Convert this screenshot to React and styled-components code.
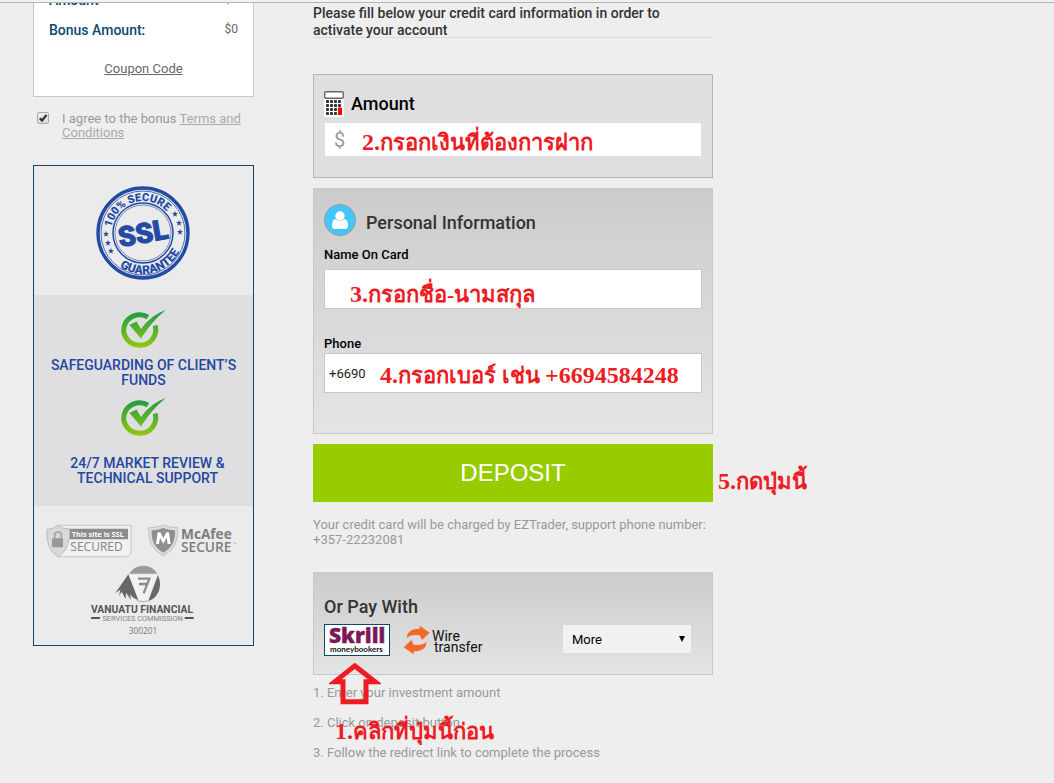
import React, { useState } from "react";
import styled, { createGlobalStyle } from "styled-components";

const GlobalStyle = createGlobalStyle`
  * {
    box-sizing: border-box;
  }

  body {
    margin: 0;
    background: #eeeeee;
    font-family: Roboto, "Liberation Sans", sans-serif;
    font-size: 13px;
    color: #999999;
  }
`;

const TopLine = styled.div`
  height: 3px;
  background: #f2f2f2;
  border-bottom: 1px solid #b6b6b6;
`;

const Page = styled.div`
  display: grid;
  grid-template-columns: 221px minmax(300px, 400px);
  column-gap: 59px;
  align-items: start;
  padding: 0 33px;
  overflow: hidden;
`;

const Sidebar = styled.aside`
  display: flex;
  flex-direction: column;
`;

const BonusCard = styled.div`
  padding: 0 15px 17px;
  background: #ffffff;
  border: 1px solid #c8c8c8;
  border-top: 0;
  overflow: hidden;
`;

const BonusRow = styled.div`
  display: flex;
  justify-content: space-between;
  margin-top: ${(props) => (props.$cut ? "-13px" : "10px")};
  line-height: 20px;
  height: 20px;
  color: #0b4a70;

  strong {
    font-size: 14px;
    font-weight: 500;
  }

  span {
    font-size: 12px;
    line-height: 18px;
    color: #666666;
  }
`;

const CouponLink = styled.a`
  display: block;
  margin-top: 19px;
  line-height: 20px;
  text-align: center;
  color: #666666;
`;

const AgreeRow = styled.div`
  display: flex;
  gap: 13px;
  margin: 15px 0 25px 4px;
  line-height: 14px;

  a {
    color: #aaaaaa;
  }
`;

const CheckWrap = styled.span`
  position: relative;
  flex: none;
  width: 12px;
  height: 12px;

  svg {
    position: absolute;
    inset: 0;
    pointer-events: none;
  }
`;

const Checkbox = styled.input`
  appearance: none;
  display: block;
  width: 12px;
  height: 12px;
  margin: 0;
  border: 1px solid #a8a8a8;
  border-radius: 2px;
  background: linear-gradient(#eeeeee, #dcdcdc);
`;

const TrustBox = styled.div`
  border: 1px solid #0b4a70;
  background: #ebebeb;
  text-align: center;
`;

const SealArea = styled.div`
  padding: 20px 2px 15px 0;

  svg {
    display: block;
    margin: 0 auto;
  }
`;

const Promises = styled.div`
  padding: 14px 10px 20px;
  background: #dfdfe1;
`;

const Promise = styled.div`
  & + & {
    margin-top: 9px;
  }

  svg {
    display: block;
    margin: 0 auto;
  }

  p {
    margin: ${(props) => (props.$loose ? "19px" : "9px")} 0 0;
    padding: ${(props) => (props.$loose ? "0 16px 0 24px" : "0")};
    font-size: 14px;
    font-weight: 500;
    line-height: 15px;
    color: #2347a0;
  }
`;

const Badges = styled.div`
  display: flex;
  flex-wrap: wrap;
  justify-content: space-between;
  padding: 18px 15px 8px 12px;
  row-gap: 7px;
`;

const BadgeBottom = styled.div`
  flex: 1 0 100%;

  svg {
    display: block;
    margin: 0 auto;
  }
`;

const Main = styled.main`
  display: flex;
  flex-direction: column;
`;

const Intro = styled.h1`
  height: 33px;
  margin: 2px 0 36px;
  padding-right: 30px;
  border-bottom: 1px solid #dcdcdc;
  font-size: 14px;
  font-weight: 500;
  line-height: 17px;
  color: #333333;
`;

const AmountPanel = styled.section`
  padding: 16px 11px 21px 10px;
  border: 1px solid #b6b6b6;
  background: #dfdfe1;
`;

const Panel = styled.section`
  margin-top: ${(props) => props.$gap};
  padding: ${(props) => props.$pad};
  border: 1px solid #c8c8c8;
  background: linear-gradient(#cccccc, #e4e4e4);
`;

const PanelHead = styled.div`
  display: flex;
  align-items: ${(props) => props.$align || "center"};
  gap: ${(props) => props.$gap};
`;

const PanelTitle = styled.h2`
  margin: 0;
  font-size: 18px;
  font-weight: 500;
  line-height: 26px;
  color: #333333;
`;

const TitleLabel = styled.label`
  font-size: 18px;
  font-weight: 500;
  line-height: 20px;
  color: #000000;
`;

const AmountField = styled.div`
  position: relative;
  display: flex;
  align-items: center;
  height: 33px;
  margin: 6px 0 0 1px;
  padding-left: 9px;
  background: #ffffff;
  font-size: 20px;
  color: #999999;
`;

const AmountInput = styled.input`
  flex: 1;
  min-width: 0;
  height: 33px;
  border: 0;
  background: transparent;
  font: inherit;
  outline: 0;
`;

const Field = styled.div`
  position: relative;
  margin-top: ${(props) => props.$gap};

  label {
    display: block;
    margin-bottom: ${(props) => props.$labelGap};
    font-weight: 500;
    line-height: 18px;
    color: #000000;
  }

  input {
    display: block;
    width: 100%;
    height: 40px;
    padding: 0 4px;
    border: 1px solid #c8c8c8;
    background: #ffffff;
    font-family: inherit;
    font-size: 13px;
    color: #222222;
    outline: 0;
  }
`;

const DepositRow = styled.div`
  position: relative;
  margin-top: 10px;
`;

const DepositButton = styled.button`
  display: block;
  width: 100%;
  height: 58px;
  padding: 0;
  border: 0;
  background: #99cc00;
  color: #ffffff;
  font-family: "Liberation Sans", Arial, sans-serif;
  font-size: 24px;
  cursor: pointer;
`;

const SmallPrint = styled.p`
  margin: 15px 0 0;
  line-height: 15px;
`;

const PayRow = styled.div`
  position: relative;
  display: flex;
  align-items: center;
  margin-top: 4px;
`;

const PayButton = styled.button`
  height: 32px;
  padding: 0;
  border: ${(props) => (props.$active ? "1px solid #0b4a70" : "0")};
  background: ${(props) => (props.$active ? "#ffffff" : "transparent")};
  cursor: pointer;

  & + & {
    margin-left: 14px;
  }

  svg {
    display: block;
  }
`;

const SelectWrap = styled.div`
  position: relative;
  width: 128px;
  margin: 0 11px 2px auto;

  svg {
    position: absolute;
    top: 11px;
    right: 6px;
    pointer-events: none;
  }
`;

const MoreSelect = styled.select`
  appearance: none;
  display: block;
  width: 100%;
  height: 28px;
  padding: 0 9px;
  border: 0;
  border-radius: 0;
  background: #f1f1f1;
  color: #000000;
  font-family: inherit;
  font-size: 13px;
`;

const Steps = styled.ol`
  position: relative;
  margin: 3px 0 0;
  padding: 0;
  list-style: none;
  line-height: 30px;
`;

// Red hints laid over the form, digits are larger than the Thai words
const Hint = styled.span`
  position: absolute;
  left: ${(props) => props.$left};
  top: ${(props) => props.$top};
  font-family: "Liberation Serif", "Times New Roman", serif;
  font-size: 22px;
  font-weight: 700;
  line-height: 28px;
  white-space: nowrap;
  color: #ed1c24;
  pointer-events: none;

  b {
    font-size: 24px;
  }
`;

const HintArrow = styled.svg`
  position: absolute;
  left: 5px;
  top: 38px;
  z-index: 1;
  pointer-events: none;
`;

const Star = ({ x, y }) => (
  <path
    transform={`translate(${x} ${y})`}
    d="M0-3 .8-.9 3-.9 1.2.5 1.9 2.7 0 1.4-1.9 2.7-1.2.5-3-.9-.8-.9Z"
  />
);

const SslSeal = () => (
  <svg width="94" height="94" viewBox="0 0 94 94" fill="#244ba3">
    <defs>
      <path id="sealTop" d="M15 47A32 32 0 0 1 79 47" />
      <path id="sealBottom" d="M6 47A41 41 0 0 0 88 47" />
    </defs>
    <g fill="none" stroke="#244ba3">
      <circle cx="47" cy="47" r="45" strokeWidth="3.4" />
      <circle cx="47" cy="47" r="42" strokeWidth="0.8" />
      <circle cx="47" cy="47" r="30" strokeWidth="1.5" />
      <circle cx="47" cy="47" r="28" strokeWidth="0.6" />
    </g>
    <g fontFamily="Roboto, sans-serif" fontWeight="900" textAnchor="middle">
      <text fontSize="11" transform="rotate(-16 47 47)">
        <textPath href="#sealTop" startOffset="50%">
          100% SECURE
        </textPath>
      </text>
      <text fontSize="12" transform="rotate(-14 47 47)">
        <textPath href="#sealBottom" startOffset="50%">
          GUARANTEE
        </textPath>
      </text>
      <text
        x="47"
        y="57"
        fontSize="28"
        stroke="#244ba3"
        strokeWidth="1"
        transform="rotate(-10 47 47)"
      >
        SSL
      </text>
    </g>
    <Star x={10} y={48} />
    <Star x={12} y={57} />
    <Star x={15} y={65} />
    <Star x={79} y={28} />
    <Star x={83} y={37} />
    <Star x={84} y={46} />
  </svg>
);

const CheckMark = ({ id }) => (
  <svg width="46" height="40" viewBox="0 0 46 40">
    <defs>
      <linearGradient
        id={id}
        gradientUnits="userSpaceOnUse"
        x1="0"
        y1="3"
        x2="0"
        y2="39"
      >
        <stop offset="0" stopColor="#239c45" />
        <stop offset="1" stopColor="#92c80a" />
      </linearGradient>
    </defs>
    <path
      d="M27 8A16 15.2 0 1 0 34 16.5"
      fill="none"
      stroke={`url(#${id})`}
      strokeWidth="5"
    />
    <path
      d="M8.3 16 15.5 12.5 20 20Q30 6 44.7 1Q31 12 20 29.5Z"
      fill={`url(#${id})`}
    />
  </svg>
);

const SslSecured = () => (
  <svg width="86" height="34" viewBox="46 58 258 102">
    <path
      d="M80 62H301V138Q301 156 283 156H80Z"
      fill="#f1f1f1"
      stroke="#c4c4c4"
      strokeWidth="3"
    />
    <path d="M100 72H292V104H100Z" fill="#8d8d8d" />
    <path
      d="M82 62Q98 74 117 74Q121 132 82 157Q44 132 49 74Q67 74 82 62Z"
      fill="#d9d9d9"
      stroke="#bdbdbd"
      strokeWidth="3"
    />
    <path
      d="M72 104V92Q72 82 82 82Q92 82 92 92V104"
      fill="none"
      stroke="#a4a4a4"
      strokeWidth="5"
    />
    <rect x="64" y="101" width="33" height="27" rx="3" fill="#989898" />
    <g fontFamily="'Open Sans', sans-serif">
      <text x="123" y="96" fontSize="22" fontWeight="700" fill="#ffffff">
        This site is SSL
      </text>
      <text x="119" y="140" fontSize="36" fontWeight="500" fill="#858585">
        SECURED
      </text>
    </g>
  </svg>
);

const McAfee = () => (
  <svg width="90" height="34" viewBox="354 58 270 102">
    <path
      d="M400 61Q420 70 443 69Q448 130 400 153Q352 130 356 69Q380 70 400 61Z"
      fill="#dddddd"
      stroke="#b4b4b4"
      strokeWidth="2"
    />
    <path
      d="M400 70Q418 78 435 77Q438 124 400 144Q362 124 365 77Q382 78 400 70Z"
      fill="#8f8f8f"
    />
    <path
      d="M378 118 383 83H391L400 101L409 83H417L422 118H413L410 99L400 117L390 99L387 118Z"
      fill="#ffffff"
    />
    <g fontFamily="'Open Sans', sans-serif" fill="#7d7d7d">
      <text x="453" y="102" fontSize="41" fontWeight="700">
        McAfee
      </text>
      <text x="453" y="143" fontSize="41" fontWeight="600">
        SECURE
      </text>
      <text x="611" y="122" fontSize="10">
        ™
      </text>
    </g>
  </svg>
);

const Vanuatu = () => (
  <svg width="104" height="72" viewBox="186 181 312 216">
    <path d="M303 207Q319 183 346 183Q374 183 388 207Z" fill="#9a9a9a" />
    <path d="M390 211Q404 246 386 271Q377 285 361 289Z" fill="#686868" />
    <path
      d="M301 209L331 286Q314 281 306 269L309 286L294 264L293 283L281 261L273 274L277 255L262 265Z"
      fill="#686868"
    />
    <path d="M303 211H386L357 286H333Z" fill="#f2f2f2" />
    <path
      d="M330 222H364L347 266M333 238H356"
      fill="none"
      stroke="#8c8c8c"
      strokeWidth="7"
    />
    <path
      d="M326 288Q346 294 365 288"
      fill="none"
      stroke="#b0b0b0"
      strokeWidth="3"
    />
    <g textAnchor="middle" fontFamily="Roboto, 'Liberation Sans', sans-serif">
      <text x="342" y="326" fontSize="31" fontWeight="700" fill="#555555">
        VANUATU FINANCIAL
      </text>
      <text x="344" y="350" fontSize="22" fill="#858585">
        SERVICES COMMISSION
      </text>
      <text
        x="345"
        y="389"
        fontSize="25"
        fill="#777777"
        fontFamily="'Open Sans', sans-serif"
      >
        300201
      </text>
    </g>
    <path d="M189 337H216V343H189ZM470 337H497V343H470Z" fill="#555555" />
  </svg>
);

const Calculator = () => (
  <svg width="20" height="26" viewBox="0 0 20 26">
    <path d="M0 7H20V26H0Z" fill="#ffffff" />
    <rect
      x="0.7"
      y="0.7"
      width="18.6"
      height="6.6"
      rx="1.2"
      fill="#ffffff"
      stroke="#666666"
      strokeWidth="1.4"
    />
    {[9, 13, 17, 21].map((y) =>
      [2, 6, 10, 14].map((x) => (
        <rect
          key={`${x}-${y}`}
          x={x}
          y={y}
          width="3"
          height="3"
          rx="0.8"
          fill="#333333"
        />
      ))
    )}
    <rect x="14" y="16.5" width="4" height="7.5" rx="0.8" fill="#ff0000" />
  </svg>
);

const UserIcon = () => (
  <svg width="32" height="32" viewBox="0 0 96 96">
    <circle
      cx="48"
      cy="48"
      r="46.5"
      fill="#45c6fb"
      stroke="#8e9ba1"
      strokeWidth="3"
    />
    <path
      d="M34 45Q24 47 24 65Q24 75 34 75H62Q72 75 72 65Q72 47 62 45Q55 51 48 51Q41 51 34 45Z"
      fill="#ffffff"
    />
    <circle cx="48" cy="36" r="14" fill="#ffffff" />
  </svg>
);

const SkrillLogo = () => (
  <svg
    width="64"
    height="30"
    viewBox="0 0 64 30"
    fontFamily="'Open Sans', sans-serif"
  >
    <text
      x="4"
      y="18"
      fontSize="21"
      fontWeight="800"
      fill="#7b1857"
      stroke="#7b1857"
      strokeWidth="0.4"
    >
      Skrill
    </text>
    <text
      x="5"
      y="27"
      fontSize="8"
      fontWeight="700"
      fill="#111111"
      fontFamily="Lato, sans-serif"
    >
      moneybookers
    </text>
  </svg>
);

const WireLogo = () => (
  <svg width="82" height="32" viewBox="0 0 82 32">
    <g fill="#f26a26" transform="scale(0.3333)">
      <path d="M8 42Q10 14 47 14V5L77 26L54 48L47 34Q22 30 8 42Z" />
      <path
        d="M8 42Q10 14 47 14V5L77 26L54 48L47 34Q22 30 8 42Z"
        transform="rotate(180 38 48)"
      />
    </g>
    <g fontFamily="Roboto, sans-serif" fontSize="14" fill="#111111">
      <text x="28" y="17">
        Wire
      </text>
      <text x="30" y="28">
        transfer
      </text>
    </g>
  </svg>
);

const App = () => {
  const [agreed, setAgreed] = useState(true);
  const [amount, setAmount] = useState("");
  const [name, setName] = useState("");
  const [phone, setPhone] = useState("+6690");

  return (
    <>
      <GlobalStyle />
      <TopLine />
      <Page>
        <Sidebar>
          <BonusCard>
            <BonusRow $cut>
              <strong>Amount</strong>
              <span>$0</span>
            </BonusRow>
            <BonusRow>
              <strong>Bonus Amount:</strong>
              <span>$0</span>
            </BonusRow>
            <CouponLink href="#coupon">Coupon Code</CouponLink>
          </BonusCard>

          <AgreeRow>
            <CheckWrap>
              <Checkbox
                id="agree"
                type="checkbox"
                checked={agreed}
                onChange={(e) => setAgreed(e.target.checked)}
              />
              {agreed && (
                <svg width="12" height="12" viewBox="0 0 12 12">
                  <path
                    d="M2.8 6.2 5 8.5 9.5 3"
                    fill="none"
                    stroke="#333333"
                    strokeWidth="2.2"
                  />
                </svg>
              )}
            </CheckWrap>
            <label htmlFor="agree">
              I agree to the bonus <a href="#terms">Terms and Conditions</a>
            </label>
          </AgreeRow>

          <TrustBox>
            <SealArea>
              <SslSeal />
            </SealArea>
            <Promises>
              <Promise>
                <CheckMark id="checkFunds" />
                <p>SAFEGUARDING OF CLIENT’S FUNDS</p>
              </Promise>
              <Promise $loose>
                <CheckMark id="checkSupport" />
                <p>24/7 MARKET REVIEW &amp; TECHNICAL SUPPORT</p>
              </Promise>
            </Promises>
            <Badges>
              <SslSecured />
              <McAfee />
              <BadgeBottom>
                <Vanuatu />
              </BadgeBottom>
            </Badges>
          </TrustBox>
        </Sidebar>

        <Main>
          <Intro>
            Please fill below your credit card information in order to activate
            your account
          </Intro>

          <AmountPanel>
            <PanelHead $gap="7px">
              <Calculator />
              <TitleLabel htmlFor="amount">Amount</TitleLabel>
            </PanelHead>
            <AmountField>
              $
              <AmountInput
                id="amount"
                value={amount}
                onChange={(e) => setAmount(e.target.value)}
              />
              <Hint $left="37px" $top="5px">
                <b>2.</b>กรอกเงินที่ต้องการฝาก
              </Hint>
            </AmountField>
          </AmountPanel>

          <Panel $gap="10px" $pad="15px 10px 40px">
            <PanelHead $gap="10px" $align="flex-end">
              <UserIcon />
              <PanelTitle>Personal Information</PanelTitle>
            </PanelHead>
            <Field $gap="10px" $labelGap="5px">
              <label htmlFor="cardName">Name On Card</label>
              <input
                id="cardName"
                value={name}
                onChange={(e) => setName(e.target.value)}
              />
              <Hint $left="26px" $top="34px">
                <b>3.</b>กรอกชื่อ-นามสกุล
              </Hint>
            </Field>
            <Field $gap="26px" $labelGap="0">
              <label htmlFor="phone">Phone</label>
              <input
                id="phone"
                value={phone}
                onChange={(e) => setPhone(e.target.value)}
              />
              <Hint $left="56px" $top="26px">
                <b>4.</b>กรอกเบอร์ เช่น <b>+6694584248</b>
              </Hint>
            </Field>
          </Panel>

          <DepositRow>
            <DepositButton type="button">DEPOSIT</DepositButton>
            <Hint $left="405px" $top="23px">
              <b>5.</b>กดปุ่มนี้
            </Hint>
          </DepositRow>

          <SmallPrint>
            Your credit card will be charged by EZTrader, support phone number:
            +357-22232081
          </SmallPrint>

          <Panel $gap="25px" $pad="21px 10px 18px">
            <PanelTitle>Or Pay With</PanelTitle>
            <PayRow>
              <PayButton type="button" $active aria-label="Skrill moneybookers">
                <SkrillLogo />
              </PayButton>
              <PayButton type="button" aria-label="Wire transfer">
                <WireLogo />
              </PayButton>
              <SelectWrap>
                <MoreSelect aria-label="More payment methods">
                  <option>More</option>
                </MoreSelect>
                <svg width="6" height="6" viewBox="0 0 6 6">
                  <path d="M0 0H6L3 6Z" fill="#000000" />
                </svg>
              </SelectWrap>
              <HintArrow width="52" height="43" viewBox="86 306 156 128">
                <path
                  d="M163 317 224 365H197V425H128V365H103Z"
                  fill="none"
                  stroke="#ed1c24"
                  strokeWidth="15"
                />
              </HintArrow>
            </PayRow>
          </Panel>

          <Steps>
            <li>1. Enter your investment amount</li>
            <li>2. Click on deposit button</li>
            <li>3. Follow the redirect link to complete the process</li>
            <Hint as="li" $left="22px" $top="39px">
              <b>1.</b>คลิกที่ปุ่มนี้ก่อน
            </Hint>
          </Steps>
        </Main>
      </Page>
    </>
  );
};

export default App;
